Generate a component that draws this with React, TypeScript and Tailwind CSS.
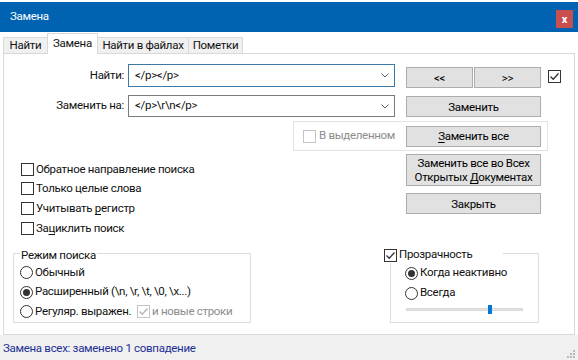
import React from "react";

function Check({ checked = false, disabled = false }: { checked?: boolean; disabled?: boolean }) {
  return (
    <span
      className={
        "flex h-[13px] w-[13px] shrink-0 items-center justify-center border bg-white " +
        (disabled ? "border-[#c4c4c4]" : "border-[#333333]")
      }
    >
      {checked && (
        <svg width="11" height="11" viewBox="0 0 11 11">
          <path
            d="M1.5 5.5 L4.2 8.2 L9.5 2.5"
            fill="none"
            stroke={disabled ? "#b5b5b5" : "#333333"}
            strokeWidth="1.3"
          />
        </svg>
      )}
    </span>
  );
}

function Radio({ checked = false }: { checked?: boolean }) {
  return (
    <span className="flex h-[13px] w-[13px] shrink-0 items-center justify-center rounded-full border border-[#333333] bg-white">
      {checked && <span className="h-[7px] w-[7px] rounded-full bg-[#333333]" />}
    </span>
  );
}

function Btn({ children, className = "" }: { children: React.ReactNode; className?: string }) {
  return (
    <button
      className={
        "flex shrink-0 items-center justify-center whitespace-nowrap border border-[#adadad] bg-[#e1e1e1] leading-[14px] text-black " +
        className
      }
    >
      {children}
    </button>
  );
}

function Combo({ value, focused = false, h }: { value: string; focused?: boolean; h: string }) {
  return (
    <div
      className={
        "ml-[4px] flex w-[267px] items-center justify-between border bg-white pl-[6px] pr-[5px] " +
        h +
        (focused ? " border-[#3a78a8]" : " border-[#7a7a7a]")
      }
    >
      <span>{value}</span>
      <svg width="8" height="5" viewBox="0 0 8 5">
        <path d="M0.5 0.5 L4 4 L7.5 0.5" fill="none" stroke="#606060" strokeWidth="1" />
      </svg>
    </div>
  );
}

export default function App() {
  return (
    <div className="h-[360px] w-[578px] overflow-hidden whitespace-nowrap bg-white font-['Roboto',sans-serif] text-[11.5px] tracking-[-0.3px] text-[#111111]">
      {/* Title bar */}
      <div className="mt-[2px] flex h-[30px] items-center justify-between bg-[#0063b1] pl-[10px] text-white">
        <span>Замена</span>
        <div className="mr-[5px] mt-[4px] flex h-[18px] w-[17px] items-center justify-center bg-[#c94f4f] text-[11px] font-bold leading-none">
          x
        </div>
      </div>

      {/* Tabs */}
      <div className="flex h-[21px] items-end pl-[3px]">
        <div className="flex h-[16px] w-[45px] items-center justify-center border border-b-0 border-[#d9d9d9] bg-[#f0f0f0]">
          Найти
        </div>
        <div className="relative z-10 -mb-px -ml-px flex h-[21px] w-[51px] items-start justify-center border border-b-0 border-[#d9d9d9] bg-white pt-[1px]">
          Замена
        </div>
        <div className="-ml-px flex h-[16px] w-[92px] items-center justify-center border border-b-0 border-[#d9d9d9] bg-[#f0f0f0]">
          Найти в файлах
        </div>
        <div className="-ml-px flex h-[16px] w-[55px] items-center justify-center border border-b-0 border-[#d9d9d9] bg-[#f0f0f0]">
          Пометки
        </div>
      </div>

      {/* Panel */}
      <div className="ml-[3px] h-[282px] w-[572px] border border-[#d9d9d9] bg-white">
        {/* Find row */}
        <div className="mt-[10px] flex items-start">
          <div className="flex h-[23px] w-[120px] items-center justify-end">Найти:</div>
          <Combo value="</p></p>" focused h="h-[23px]" />
          <Btn className="ml-[11px] mt-[3px] h-[21px] w-[67px]">&lt;&lt;</Btn>
          <Btn className="ml-[1px] mt-[3px] h-[21px] w-[67px]">&gt;&gt;</Btn>
          <div className="ml-[7px] mt-[6px]">
            <Check checked />
          </div>
        </div>

        {/* Replace row */}
        <div className="mt-[7px] flex items-start">
          <div className="flex h-[22px] w-[120px] items-center justify-end">Заменить на:</div>
          <Combo value="</p>\r\n</p>" h="h-[22px]" />
          <Btn className="ml-[11px] mt-[1px] h-[21px] w-[135px]">Заменить</Btn>
        </div>

        {/* In selection group */}
        <div className="ml-[289px] mt-[4px] flex h-[30px] w-[255px] items-center border border-[#e3e3e3] pl-[9px]">
          <Check disabled />
          <span className="ml-[3px] text-[#8c8c8c]">В выделенном</span>
          <Btn className="ml-auto mr-[6px] h-[21px] w-[135px]">
            <span>
              <span className="underline underline-offset-2">З</span>аменить все
            </span>
          </Btn>
        </div>

        {/* Options + buttons */}
        <div className="mt-[3px] flex items-start">
          <div className="ml-[17px] flex w-[385px] flex-col pt-[6px]">
            <div className="flex h-[19px] items-center gap-[2px]">
              <Check />
              <span>Обратное направление поиска</span>
            </div>
            <div className="flex h-[19px] items-center gap-[2px]">
              <Check />
              <span>Только целые слова</span>
            </div>
            <div className="flex h-[21px] items-center gap-[2px]">
              <Check />
              <span>
                Учитывать <span className="underline underline-offset-2">р</span>егистр
              </span>
            </div>
            <div className="flex h-[19px] items-center gap-[2px]">
              <Check />
              <span>
                За<span className="underline underline-offset-2">ц</span>иклить поиск
              </span>
            </div>
          </div>
          <div className="flex w-[135px] flex-col">
            <Btn className="h-[32px] w-[135px] flex-col leading-[13px]">
              <span>Заменить все во Всех</span>
              <span>
                Открытых <span className="underline underline-offset-2">Д</span>окументах
              </span>
            </Btn>
            <Btn className="mt-[7px] h-[21px] w-[135px]">Закрыть</Btn>
          </div>
        </div>

        {/* Bottom groups */}
        <div className="mt-[15px] flex items-start">
          <div className="relative ml-[9px] h-[70px] w-[238px] border border-[#dcdcdc]">
            <span className="absolute left-[6px] top-[-7px] bg-white px-[1px] leading-[16px]">Режим поиска</span>
            <div className="flex flex-col pl-[6px] pt-[9px]">
              <div className="flex h-[19px] items-center gap-[2px]">
                <Radio />
                <span>Обычный</span>
              </div>
              <div className="flex h-[20px] items-center gap-[2px]">
                <Radio checked />
                <span>Расширенный (\n, \r, \t, \0, \x...)</span>
              </div>
              <div className="flex h-[19px] items-center">
                <Radio />
                <span className="ml-[2px] w-[102px]">Регуляр. выражен.</span>
                <Check checked disabled />
                <span className="ml-[2px] text-[#8c8c8c]">и новые строки</span>
              </div>
            </div>
          </div>

          <div className="relative ml-[139px] h-[70px] w-[149px] border border-[#dcdcdc]">
            <div className="absolute left-[-7px] top-[-7px] flex h-[16px] w-[119px] items-center gap-[2px] bg-white">
              <Check checked />
              <span>Прозрачность</span>
            </div>
            <div className="flex flex-col pl-[14px] pt-[9px]">
              <div className="flex h-[20px] items-center gap-[2px]">
                <Radio checked />
                <span>Когда неактивно</span>
              </div>
              <div className="flex h-[20px] items-center gap-[2px]">
                <Radio />
                <span>Всегда</span>
              </div>
              <div className="relative ml-[1px] mt-[2px] h-[9px] w-[117px]">
                <div className="mt-[3px] h-[3px] w-[117px] border border-[#d6d6d6] bg-[#e7e7e7]" />
                <div className="absolute left-[82px] top-0 h-[9px] w-[4px] bg-[#0078d7]" />
              </div>
            </div>
          </div>
        </div>
      </div>

      {/* Status bar */}
      <div className="flex h-[25px] items-center bg-[#f0f0f0] pl-[3px] pt-[2px]">
        <span className="text-[#1c2f96]">Замена всех: заменено 1 совпадение</span>
        <svg className="ml-auto mr-[2px] mt-[10px]" width="10" height="10" viewBox="0 0 10 10">
          <g fill="#b8b8b8">
            <rect x="7" y="1" width="2" height="2" />
            <rect x="4" y="4" width="2" height="2" />
            <rect x="7" y="4" width="2" height="2" />
            <rect x="1" y="7" width="2" height="2" />
            <rect x="4" y="7" width="2" height="2" />
            <rect x="7" y="7" width="2" height="2" />
          </g>
        </svg>
      </div>
    </div>
  );
}
